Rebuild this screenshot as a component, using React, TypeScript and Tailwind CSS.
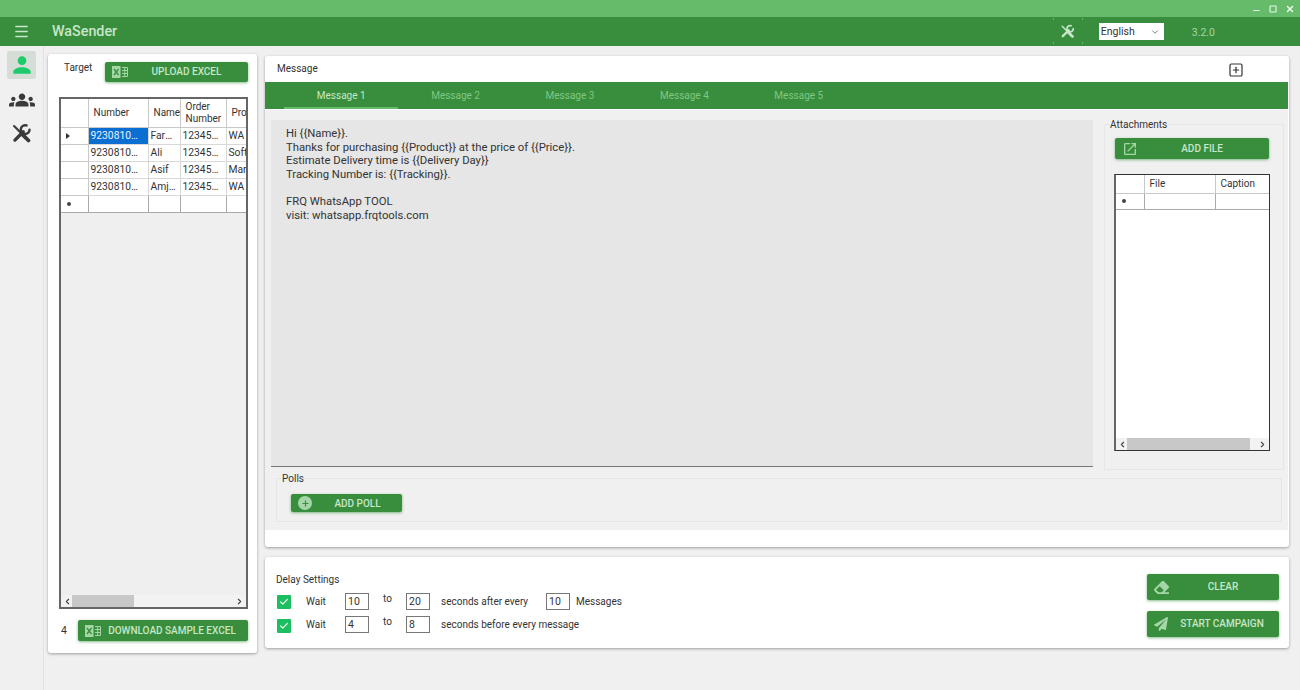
import { Check, ChevronDown, ChevronLeft, ChevronRight, Menu, Minus, Plus, Square, SquarePlus, X } from "lucide-react";
import { FaEraser, FaPaperPlane } from "react-icons/fa";
import { MdGroups, MdOpenInNew, MdPerson } from "react-icons/md";
import type { ReactNode } from "react";

type Column = { label: ReactNode; width: number; align?: string };

const targetColumns: Column[] = [
  { label: "", width: 27 },
  { label: "Number", width: 60, align: "pl-[5px]" },
  { label: "Name", width: 32, align: "pl-[5px]" },
  { label: <span className="block leading-[12px]">Order<br />Number</span>, width: 46, align: "pl-[5px]" },
  { label: "Product", width: 60, align: "pl-[5px]" },
];

const targetRows = [
  ["923081099999", "Farhan", "123456789", "WA Marketing"],
  ["923081099999", "Ali", "123456789", "Software"],
  ["923081099999", "Asif", "123456789", "Marketing"],
  ["923081099999", "Amjad", "123456789", "WA Marketing"],
];

const attachColumns: Column[] = [
  { label: "", width: 28 },
  { label: "File", width: 71, align: "pl-[5px]" },
  { label: "Caption", width: 55, align: "pl-[5px]" },
];

function ToolsIcon({ size, className }: { size: number; className: string }) {
  return (
    <svg width={size} height={size} viewBox="0 0 24 24" fill="none" stroke="currentColor" strokeLinecap="round" className={className}>
      <path d="M3.5 3.5 L12 12" strokeWidth="2.4" />
      <path d="M13.5 13.5 L20 20" strokeWidth="4.4" />
      <path d="M4.5 19.5 L14 10" strokeWidth="3.8" />
      <path d="M17.8 2.8 A5 5 0 1 0 21.2 7.6" strokeWidth="2.8" />
    </svg>
  );
}

function ExcelIcon() {
  return (
    <svg width="16" height="14" viewBox="0 0 16 14" className="text-[#a5d6a7]">
      <rect x="0" y="1" width="8.5" height="12" fill="currentColor" />
      <path d="M2 4 L6.5 10 M6.5 4 L2 10" stroke="#388e3c" strokeWidth="1.3" />
      <path d="M10 2.5 H15.5 V11.5 H10 M10 5.5 H15.5 M10 8.5 H15.5 M12.7 2.5 V11.5" fill="none" stroke="currentColor" strokeWidth="1" />
    </svg>
  );
}

function GreenButton({ icon, label, className }: { icon: ReactNode; label: string; className: string }) {
  return (
    <button className={`relative flex items-center justify-center bg-[#388e3c] text-[#c8e6c9] text-[10px] font-medium rounded-[2px] shadow-[0_1px_3px_rgba(56,142,60,0.6)] ${className}`}>
      <span className="absolute left-[7px] top-0 bottom-0 flex items-center">{icon}</span>
      {label}
    </button>
  );
}

function ScrollBar({ left, width }: { left: number; width: number }) {
  return (
    <div className="relative h-[12px] bg-[#f2f2f2] flex items-center justify-between px-[2px] shrink-0">
      <ChevronLeft size={9} strokeWidth={3} className="text-[#444]" />
      <div className="absolute top-0 bottom-0 bg-[#c8c8c8]" style={{ left, width }} />
      <ChevronRight size={9} strokeWidth={3} className="text-[#444]" />
    </div>
  );
}

function Grid({
  columns,
  rows,
  headerHeight,
  rowHeight,
  bg,
  thumb,
  className,
}: {
  columns: Column[];
  rows: string[][];
  headerHeight: number;
  rowHeight: number;
  bg: string;
  thumb: { left: number; width: number };
  className: string;
}) {
  const total = columns.reduce((sum, c) => sum + c.width, 0);
  return (
    <div className={`flex flex-col overflow-hidden ${bg} ${className}`}>
      <div className="flex-1 overflow-hidden">
        <table className="table-fixed border-collapse text-[10.3px] leading-[14px] text-[#333]" style={{ width: total }}>
          <colgroup>
            {columns.map((c, i) => (
              <col key={i} style={{ width: c.width }} />
            ))}
          </colgroup>
          <thead>
            <tr style={{ height: headerHeight }}>
              {columns.map((c, i) => (
                <th key={i} className={`p-0 pt-[1px] bg-white font-normal text-[10px] text-left border-r border-b border-[#c8c8c8] whitespace-nowrap overflow-hidden ${c.align ?? ""}`}>
                  {c.label}
                </th>
              ))}
            </tr>
          </thead>
          <tbody>
            {rows.map((row, r) => (
              <tr key={r} style={{ height: rowHeight }}>
                <td className="p-0 bg-white border-r border-b border-[#c8c8c8] pl-[5px]">
                  {r === 0 && <span className="block w-0 h-0 border-y-[3.5px] border-y-transparent border-l-[4px] border-l-[#333]" />}
                </td>
                {row.map((cell, c) => (
                  <td
                    key={c}
                    className={`p-0 border-r border-b border-[#d8d8d8] pl-[2px] whitespace-nowrap overflow-hidden ${r === 0 && c === 0 ? "bg-[#0a6fd0] text-[#e8f2ff]" : "bg-white"} ${c === 1 ? "text-ellipsis pr-[3px]" : c < 3 ? "text-ellipsis pr-[6px]" : ""}`}
                  >
                    {cell}
                  </td>
                ))}
              </tr>
            ))}
            <tr style={{ height: rowHeight }}>
              <td className="p-0 bg-white border-r border-b border-[#aaa] pl-[6px]">
                <span className="block w-[4px] h-[4px] rounded-full bg-[#444]" />
              </td>
              {columns.slice(1).map((_, c) => (
                <td key={c} className="p-0 bg-white border-r border-b border-[#aaa]" />
              ))}
            </tr>
          </tbody>
        </table>
      </div>
      <ScrollBar left={thumb.left} width={thumb.width} />
    </div>
  );
}

function NumBox({ value }: { value: string }) {
  return (
    <div className="w-[24px] h-[17px] border border-[#777] bg-white text-[10.5px] leading-[15px] pl-[2px] text-[#333]">
      {value}
    </div>
  );
}

function CheckMark() {
  return (
    <div className="w-[14px] h-[14px] bg-[#1cbf60] rounded-[1px] flex items-center justify-center mt-[2px]">
      <Check size={10} strokeWidth={3} className="text-[#e8f5e9]" />
    </div>
  );
}

export default function App() {
  return (
    <div className="w-[1300px] h-[690px] flex flex-col bg-[#f0f0f0] overflow-hidden font-['Roboto',sans-serif] text-[#333]">
      {/* title bar */}
      <div className="h-[17px] bg-[#66bb6a] flex items-center justify-end pr-[5px] gap-[8px] shrink-0">
        <Minus size={9} strokeWidth={3} className="text-[#e8f5e9] mt-[3px]" />
        <Square size={8} strokeWidth={3.5} className="text-[#e8f5e9]" />
        <X size={10} strokeWidth={3.5} className="text-[#f1f8e9]" />
      </div>

      {/* header */}
      <div className="h-[29px] bg-[#388e3c] flex items-center shrink-0">
        <Menu size={17} strokeWidth={2} className="ml-[13px] text-[#c8e6c9]" />
        <span className="ml-[22px] text-[14.3px] font-medium text-[#c8e6c9]">WaSender</span>
        <div className="ml-auto flex items-center">
          <div className="relative w-[30px] h-[29px] flex items-center justify-center">
            <ToolsIcon size={15} className="text-[#c8e6c9]" />
            <span className="absolute left-0 top-[1px] w-[1px] h-[2px] bg-[#66bb6a]" />
            <span className="absolute right-0 top-[1px] w-[1px] h-[2px] bg-[#66bb6a]" />
            <span className="absolute left-0 bottom-[2px] w-[1px] h-[2px] bg-[#66bb6a]" />
            <span className="absolute right-0 bottom-[2px] w-[1px] h-[2px] bg-[#66bb6a]" />
          </div>
          <div className="ml-[16px] w-[65px] h-[17px] bg-white text-[10.5px] leading-[15px] pl-[2px] flex items-center justify-between pr-[4px] text-[#333]">
            English
            <ChevronDown size={10} className="text-[#666]" />
          </div>
          <span className="ml-[28px] mr-[85px] mt-[3px] text-[10.5px] text-[#a5d6a7]">3.2.0</span>
        </div>
      </div>

      <div className="flex-1 flex min-h-0">
        {/* sidebar */}
        <div className="w-[44px] shrink-0 border-r border-[#e2e2e2] flex flex-col items-center pt-[5px]">
          <div className="w-[29px] h-[28px] bg-[#d6ddd7] rounded-[2px] flex items-center justify-center">
            <MdPerson size={26} className="text-[#1ecb6b]" />
          </div>
          <MdGroups size={26} className="text-[#3a3a3a] mt-[8px]" />
          <ToolsIcon size={21} className="text-[#3a3a3a] mt-[10px]" />
        </div>

        {/* target panel */}
        <div className="ml-[4px] mt-[8px] w-[209px] h-[599px] bg-white rounded-[3px] shadow-[0_1px_3px_rgba(0,0,0,0.35)] flex flex-col pl-[11px] pr-[9px] shrink-0">
          <div className="flex items-start pt-[8px]">
            <span className="ml-[5px] text-[10px] leading-[11px] w-[41px]">Target</span>
            <GreenButton className="w-[143px] h-[20px] pl-[20px] pb-[2px]" icon={<ExcelIcon />} label="UPLOAD EXCEL" />
          </div>
          <Grid
            className="mt-[15px] w-[189px] h-[512px] border-2 border-[#666]"
            columns={targetColumns}
            rows={targetRows}
            headerHeight={28}
            rowHeight={17}
            bg="bg-[#efefef]"
            thumb={{ left: 11, width: 62 }}
          />
          <div className="flex items-center mt-[11px]">
            <span className="ml-[2px] w-[17px] text-[10.5px]">4</span>
            <GreenButton className="w-[170px] h-[21px] pl-[18px]" icon={<ExcelIcon />} label="DOWNLOAD SAMPLE EXCEL" />
          </div>
        </div>

        <div className="ml-[8px] w-[1024px] flex flex-col pt-[10px] shrink-0">
          {/* message panel */}
          <div className="h-[491px] bg-white rounded-[3px] shadow-[0_1px_3px_rgba(0,0,0,0.35)] flex flex-col">
            <div className="h-[26px] flex items-center justify-between pl-[12px] pr-[45px] shrink-0">
              <span className="text-[10px] mb-[2px]">Message</span>
              <SquarePlus size={16} strokeWidth={1.8} className="text-[#333] mt-[1px]" />
            </div>
            <div className="h-[27px] bg-[#388e3c] flex pl-[19px] shrink-0 mr-[1px]">
              {["Message 1", "Message 2", "Message 3", "Message 4", "Message 5"].map((tab, i) => (
                <div
                  key={tab}
                  className={`w-[114.4px] flex items-center justify-center text-[10px] ${i === 0 ? "text-[#c8e6c9] border-b-2 border-[#66bb6a] pt-[1px]" : "text-[#81c784] pb-[1px]"}`}
                >
                  {tab}
                </div>
              ))}
            </div>

            <div className="mt-[1px] h-[420px] bg-[#f0f0f0] pt-[8px] shrink-0 mr-[1px]">
              <div className="flex items-start">
                <div className="ml-[6px] mt-[2px] w-[822px] h-[347px] bg-[#e6e6e6] border-b border-[#777] pl-[15px] pt-[7px] text-[11.3px] leading-[13.5px] text-[#333] shrink-0">
                  <p>Hi {"{{Name}}"}.</p>
                  <p>Thanks for purchasing {"{{Product}}"} at the price of {"{{Price}}"}.</p>
                  <p>Estimate Delivery time is {"{{Delivery Day}}"}</p>
                  <p>Tracking Number is: {"{{Tracking}}"}.</p>
                  <p className="mt-[14px]">FRQ WhatsApp TOOL</p>
                  <p>visit: whatsapp.frqtools.com</p>
                </div>
                <fieldset className="ml-[11px] w-[180px] h-[352px] border border-[#e6e6e6] min-w-0 pl-[9px] shrink-0">
                  <legend className="ml-[-4px] text-[10px] leading-[13px]">Attachments</legend>
                  <GreenButton
                    className="mt-[7px] ml-[1px] w-[154px] h-[21px] pl-[20px]"
                    icon={<MdOpenInNew size={16} className="text-[#a5d6a7]" />}
                    label="ADD FILE"
                  />
                  <Grid
                    className="mt-[15px] w-[156px] h-[277px] border border-[#333] border-l-2 border-l-[#666]"
                    columns={attachColumns}
                    rows={[]}
                    headerHeight={18}
                    rowHeight={16}
                    bg="bg-white"
                    thumb={{ left: 11, width: 123 }}
                  />
                </fieldset>
              </div>
              <fieldset className="mt-[2px] ml-[11px] w-[1006px] h-[50px] border border-[#e6e6e6] min-w-0 pl-[14px]">
                <legend className="ml-[-9px] text-[10px] leading-[13px]">Polls</legend>
                <GreenButton
                  className="mt-[9px] w-[111px] h-[18px] pl-[22px]"
                  icon={
                    <span className="w-[14px] h-[14px] rounded-full bg-[#a5d6a7] flex items-center justify-center">
                      <Plus size={9} strokeWidth={3} className="text-[#388e3c]" />
                    </span>
                  }
                  label="ADD POLL"
                />
              </fieldset>
            </div>
          </div>

          {/* delay panel */}
          <div className="mt-[10px] h-[91px] bg-white rounded-[3px] shadow-[0_1px_3px_rgba(0,0,0,0.35)] flex justify-between pl-[11px] pr-[10px]">
            <div className="text-[10px]">
              <div className="mt-[16px] leading-[13px]">Delay Settings</div>
              <div className="mt-[7px] flex items-start h-[17px]">
                <div className="ml-[1px] w-[29px]"><CheckMark /></div>
                <span className="w-[39px] leading-[17px]">Wait</span>
                <NumBox value="10" />
                <span className="w-[37px] text-center leading-[12px]">to</span>
                <NumBox value="20" />
                <span className="ml-[11px] w-[105px] leading-[17px]">seconds after every</span>
                <NumBox value="10" />
                <span className="ml-[6px] leading-[17px]">Messages</span>
              </div>
              <div className="mt-[6px] flex items-start h-[17px]">
                <div className="ml-[1px] w-[29px] pt-[1px]"><CheckMark /></div>
                <span className="w-[39px] leading-[17px]">Wait</span>
                <NumBox value="4" />
                <span className="w-[37px] text-center leading-[12px]">to</span>
                <NumBox value="8" />
                <span className="ml-[11px] leading-[17px]">seconds before every message</span>
              </div>
            </div>
            <div className="flex flex-col gap-[11px] pt-[17px]">
              <GreenButton
                className="w-[132px] h-[26px] pl-[20px] pb-[2px]"
                icon={<FaEraser size={15} className="text-[#a5d6a7]" />}
                label="CLEAR"
              />
              <GreenButton
                className="w-[132px] h-[26px] pl-[18px] pb-[2px]"
                icon={<FaPaperPlane size={14} className="text-[#a5d6a7]" />}
                label="START CAMPAIGN"
              />
            </div>
          </div>
        </div>
      </div>
    </div>
  );
}
